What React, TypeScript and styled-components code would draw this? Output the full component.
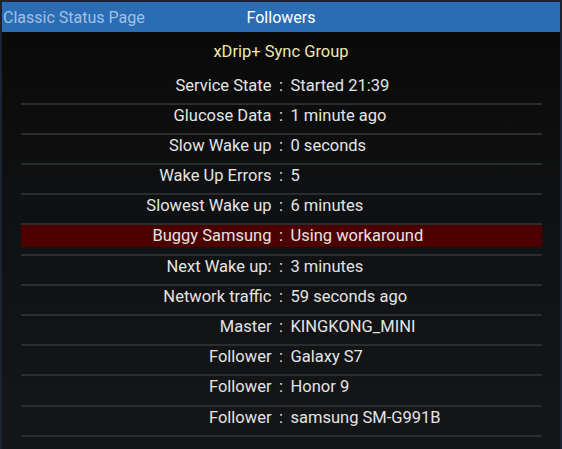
import React from 'react';
import styled, { createGlobalStyle } from 'styled-components';

const GlobalStyle = createGlobalStyle`
  html, body {
    margin: 0;
    padding: 0;
    background: #1b2230;
  }
  body {
    font-family: Roboto, 'Noto Sans', sans-serif;
  }
`;

interface StatusRow {
  label: string;
  value: string;
  warn?: boolean;
}

const rows: StatusRow[] = [
  { label: 'Service State', value: 'Started 21:39' },
  { label: 'Glucose Data', value: '1 minute ago' },
  { label: 'Slow Wake up', value: '0 seconds' },
  { label: 'Wake Up Errors', value: '5' },
  { label: 'Slowest Wake up', value: '6 minutes' },
  { label: 'Buggy Samsung', value: 'Using workaround', warn: true },
  { label: 'Next Wake up:', value: '3 minutes' },
  { label: 'Network traffic', value: '59 seconds ago' },
  { label: 'Master', value: 'KINGKONG_MINI' },
  { label: 'Follower', value: 'Galaxy S7' },
  { label: 'Follower', value: 'Honor 9' },
  { label: 'Follower', value: 'samsung SM-G991B' },
];

const Screen = styled.div`
  width: 562px;
  height: 449px;
  box-sizing: border-box;
  padding: 2px 2px 0 2px;
  background: #1c2433;
  overflow: hidden;
`;

const Page = styled.div`
  height: 100%;
  background: linear-gradient(to bottom, #080808 0%, #0f1011 40%, #151618 100%);
`;

const TitleStrip = styled.div`
  height: 30px;
  background: #2a6db5;
  display: grid;
  grid-template-columns: 1fr auto 1fr;
  align-items: center;
  font-size: 16px;
`;

const PrevTitle = styled.div`
  color: #a3c0e3;
  padding-left: 1px;
  white-space: nowrap;
`;

const CurrentTitle = styled.div`
  color: #ffffff;
`;

const GroupHeading = styled.div`
  color: #efe7b0;
  font-size: 16.5px;
  line-height: 22px;
  text-align: center;
  padding: 9px 0 11.5px;
`;

const Table = styled.div`
  width: 521px;
  margin: 0 auto;
`;

const Row = styled.div`
  padding-bottom: 6.2px;
  border-bottom: 2px solid #2b2c2e;
`;

const Cells = styled.div<{ $warn?: boolean }>`
  display: grid;
  grid-template-columns: 1fr auto 1fr;
  height: 22px;
  line-height: 22px;
  font-size: 16.5px;
  color: #e4e4e4;
  background: ${(p) => (p.$warn ? '#4d0000' : 'transparent')};
  white-space: nowrap;
`;

const Label = styled.div`
  text-align: right;
`;

const Colon = styled.div`
  padding: 0 7.5px;
`;

const Value = styled.div`
  text-align: left;
`;

const App: React.FC = () => {
  return (
    <Screen>
      <GlobalStyle />
      <Page>
        <TitleStrip>
          <PrevTitle>Classic Status Page</PrevTitle>
          <CurrentTitle>Followers</CurrentTitle>
          <div />
        </TitleStrip>
        <GroupHeading>xDrip+ Sync Group</GroupHeading>
        <Table>
          {rows.map((row, i) => (
            <Row key={i}>
              <Cells $warn={row.warn}>
                <Label>{row.label}</Label>
                <Colon>:</Colon>
                <Value>{row.value}</Value>
              </Cells>
            </Row>
          ))}
        </Table>
      </Page>
    </Screen>
  );
};

export default App;
